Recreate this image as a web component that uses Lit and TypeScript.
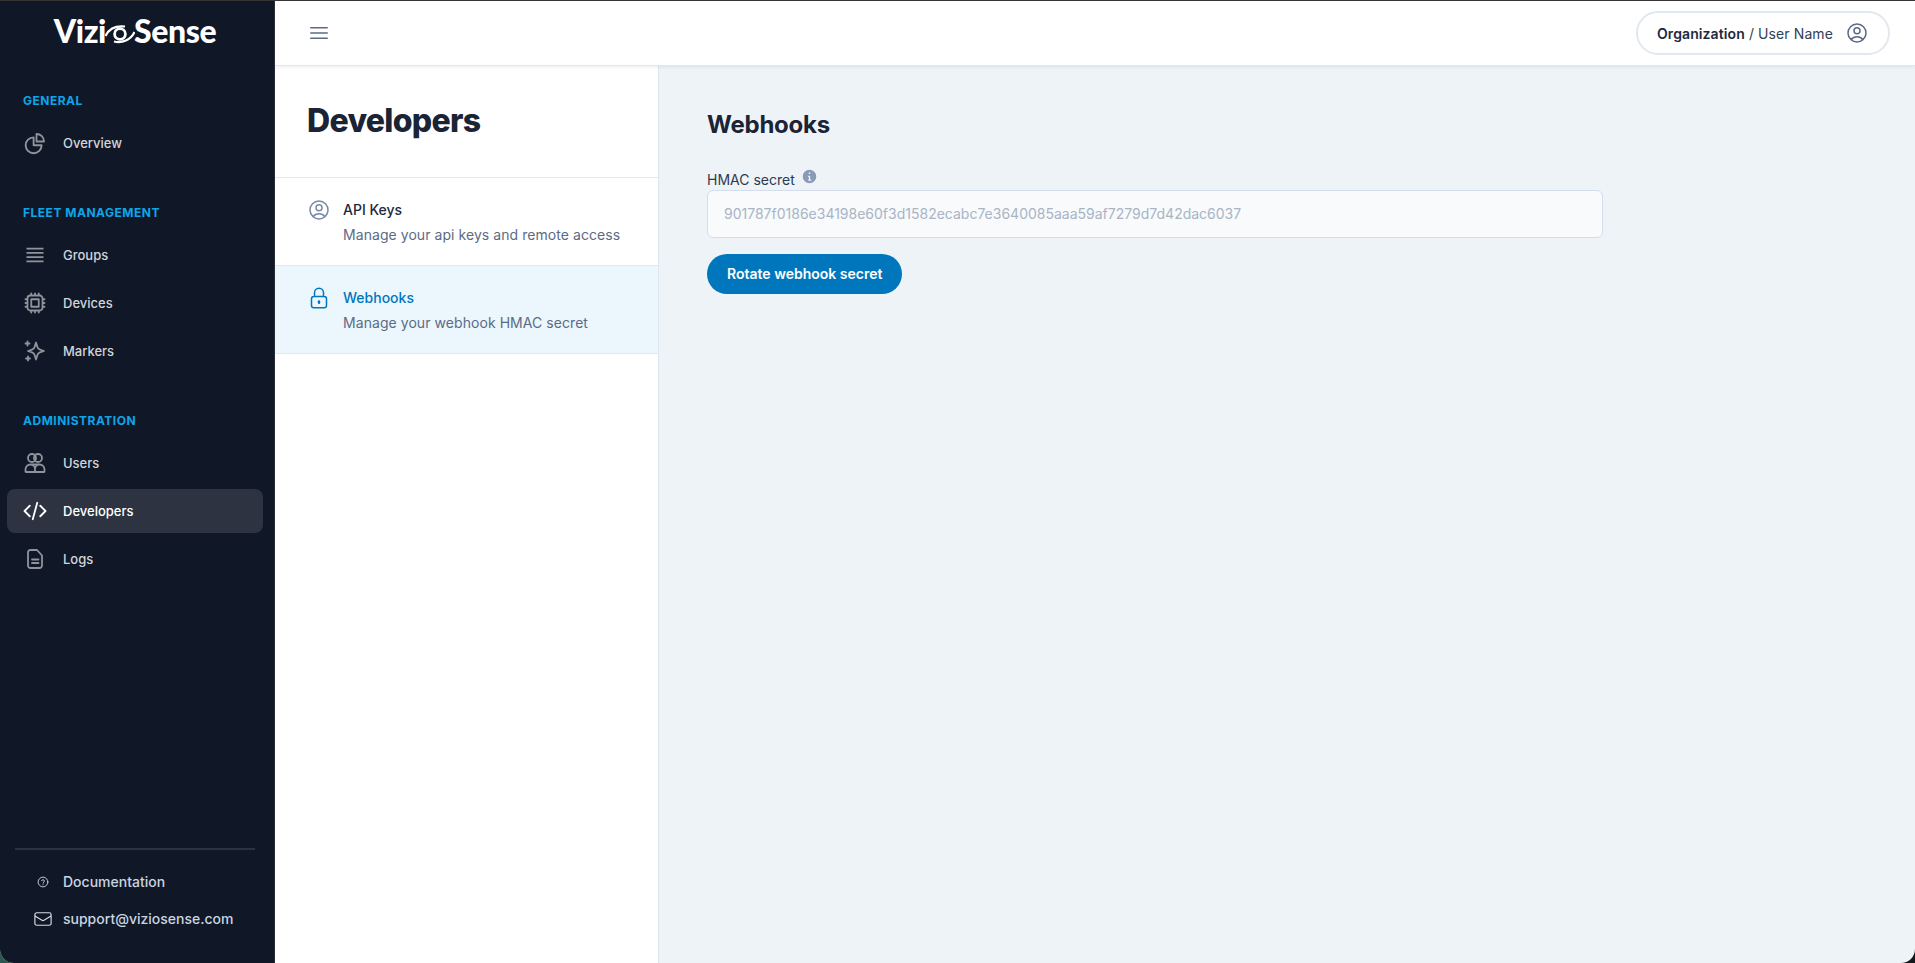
import { LitElement, html, css, svg } from "lit";
import { customElement } from "lit/decorators.js";

const ic = (body: unknown, size = 24, sw = 1.5, cls = "") => html`<svg class=${cls} width=${size} height=${size} viewBox="0 0 24 24" fill="none" stroke="currentColor" stroke-width=${sw} stroke-linecap="round" stroke-linejoin="round">${body}</svg>`;

const icons = {
  pie: svg`<path d="M10.5 6a7.5 7.5 0 1 0 7.5 7.5h-7.5V6Z" transform="translate(-0.5 0) scale(1.06)"/><path d="M13.5 10.5H21A7.5 7.5 0 0 0 13.5 3v7.5Z"/>`,
  groups: svg`<path d="M3.5 5.6h17M3.5 9.9h17M3.5 14.1h17M3.5 18.4h17" stroke-linecap="butt"/>`,
  chip: svg`<path d="M8.25 2.5v2M4.5 8.25h-2m19 0h-2M4.5 12h-2m19 0h-2m-15 3.75h-2m19 0h-2M8.25 19.5v2M12 2.5v2m0 15v2m3.75-19v2m0 15v2M7.25 19.5h9.5a2.75 2.75 0 0 0 2.75-2.75v-9.5a2.75 2.75 0 0 0-2.75-2.75h-9.5A2.75 2.75 0 0 0 4.5 7.25v9.5a2.75 2.75 0 0 0 2.75 2.75Zm1-11.25h7.5v7.5h-7.5v-7.5Z"/>`,
  spark: svg`<path d="M13.5 3.5l1.4 4.6a4 4 0 0 0 2.6 2.6l4 1.3-4 1.3a4 4 0 0 0-2.6 2.6l-1.4 4.6-1.4-4.6a4 4 0 0 0-2.6-2.6l-4-1.3 4-1.3a4 4 0 0 0 2.6-2.6l1.4-4.6Z" transform="translate(-0.5 0)"/><path d="M4.5 2.5v4M2.5 4.5h4M5 17.5v4M3 19.5h4"/>`,
  users: svg`<circle cx="9" cy="7" r="4"/><circle cx="15" cy="7" r="4"/><path d="M2.5 20.5v-2a5 5 0 0 1 5-5h9a5 5 0 0 1 5 5v2a.5.5 0 0 1-.5.5H3a.5.5 0 0 1-.5-.5Z"/><path d="M12 21v-3.5a4 4 0 0 0-2.5-3.5M12 17.5a4 4 0 0 1 2.5-3.5"/>`,
  code: svg`<path d="M17.25 6.75 22.5 12l-5.25 5.25m-10.5 0L1.5 12l5.25-5.25m7.5-3-4.5 16.5"/>`,
  doc: svg`<path d="M5 5.5A2.5 2.5 0 0 1 7.5 3H14l5 5.5v10a2.5 2.5 0 0 1-2.5 2.5h-9A2.5 2.5 0 0 1 5 18.5v-13Z"/><path d="M9 12.5h6.5M9 16h6.5"/>`,
  help: svg`<circle cx="12" cy="12" r="9.75"/><path d="M9.2 9.3a2.9 2.9 0 0 1 5.6.9c0 1.9-2.8 2.3-2.8 4"/><path d="M12 17.4v.1"/>`,
  mail: svg`<path d="M21.75 6.75v10.5a2.25 2.25 0 0 1-2.25 2.25h-15a2.25 2.25 0 0 1-2.25-2.25V6.75m19.5 0A2.25 2.25 0 0 0 19.5 4.5h-15a2.25 2.25 0 0 0-2.25 2.25m19.5 0v.243a2.25 2.25 0 0 1-1.07 1.916l-7.5 4.615a2.25 2.25 0 0 1-2.36 0L3.32 8.91a2.25 2.25 0 0 1-1.07-1.916V6.75"/>`,
  user: svg`<path d="M17.982 18.725A7.488 7.488 0 0 0 12 15.75a7.488 7.488 0 0 0-5.982 2.975m11.964 0a9 9 0 1 0-11.963 0m11.963 0A8.966 8.966 0 0 1 12 21a8.966 8.966 0 0 1-5.982-2.275M15 9.75a3 3 0 1 1-6 0 3 3 0 0 1 6 0Z"/>`,
  lock: svg`<path d="M16.5 10.5V6.75a4.5 4.5 0 1 0-9 0v3.75m-.75 11.25h10.5a2.25 2.25 0 0 0 2.25-2.25v-6.75a2.25 2.25 0 0 0-2.25-2.25H6.75a2.25 2.25 0 0 0-2.25 2.25v6.75a2.25 2.25 0 0 0 2.25 2.25Z"/><path d="M12 15.5v1.2" stroke-width="2.4"/>`,
  menu: svg`<path d="M3.75 6.75h16.5M3.75 12h16.5m-16.5 5.25h16.5"/>`,
};

const sections = [
  { title: "GENERAL", cls: "s1", items: [{ t: "Overview", i: icons.pie }] },
  { title: "FLEET MANAGEMENT", cls: "s2", items: [{ t: "Groups", i: icons.groups }, { t: "Devices", i: icons.chip }, { t: "Markers", i: icons.spark }] },
  { title: "ADMINISTRATION", cls: "s3", items: [{ t: "Users", i: icons.users }, { t: "Developers", i: icons.code, active: true }, { t: "Logs", i: icons.doc }] },
];

@customElement("app-root")
export class AppRoot extends LitElement {
  static styles = css`
    :host { display: block; width: 100%; height: 963px; overflow: hidden; background: linear-gradient(90deg, #2c5a50 0, #14181c 8%, #14181c 100%); font-family: Inter, "Liberation Sans", sans-serif; }
    * { box-sizing: border-box; }
    .shell { height: 963px; display: grid; grid-template-columns: 275px 1fr; border-top: 1px solid #343434; border-radius: 0 0 14px 14px; overflow: hidden; background: #eef3f8; }
    .side { background: #101827; display: flex; flex-direction: column; padding: 0 11px 0 7px; border-right: 1px solid #252b38; min-height: 0; }
    .logo { display: flex; align-items: center; justify-content: center; height: 60px; color: #fff; font-family: Lato, sans-serif; font-weight: 900; font-size: 32px; letter-spacing: -0.4px; line-height: 1; }
    .logo svg { margin: 5px -1px 0 -1px; flex: none; }
    .sec { display: flex; flex-direction: column; gap: 4px; }
    .s1 { margin-top: 32px; }
    .s2 { margin-top: 40px; }
    .s3 { margin-top: 40px; }
    .sec-t { margin: 0 0 8px 16px; height: 16px; line-height: 16px; font-size: 12px; font-weight: 700; letter-spacing: 0.5px; color: #0ea5e9; }
    .item { display: flex; align-items: center; height: 44px; padding-left: 16px; border-radius: 8px; color: #d1d5db; font-size: 13px; font-weight: 500; gap: 16px; }
    .item svg { color: #8f939b; flex: none; }
    .item.active { background: #2d3340; color: #fff; }
    .item.active svg { color: #fff; }
    .foot { margin-top: auto; padding: 0 8px 26px 8px; }
    .divider { height: 2px; background: #2b3240; margin-bottom: 13px; }
    .flink { display: flex; align-items: center; height: 37px; color: #cbd5e1; font-size: 14px; font-weight: 500; }
    .flink .ic { width: 36px; margin: 0 2px 0 10px; display: flex; justify-content: center; color: #d5dae2; }
    .main { display: flex; flex-direction: column; min-width: 0; min-height: 0; }
    .top { height: 65px; flex: none; background: #fff; border-bottom: 1px solid #e5e7eb; box-shadow: 0 1px 3px rgba(100,110,125,.14); display: flex; align-items: center; justify-content: space-between; padding: 0 25px 0 32px; position: relative; z-index: 1; }
    .burger { color: #5b6b85; display: flex; }
    .pill { height: 44px; width: 254px; border: 2px solid #e2e8f0; border-radius: 22px; display: flex; align-items: center; justify-content: flex-end; padding-right: 19px; gap: 12px; font-size: 14px; color: #334155; letter-spacing: 0.1px; }
    .pill b { font-weight: 600; color: #1e293b; }
    .pill svg { color: #5b6b85; }
    .body { flex: 1; display: flex; min-height: 0; }
    .panel { width: 384px; flex: none; background: #fff; border-right: 1px solid #dde4ee; }
    .panel h1 { margin: 0; height: 112px; padding: 0 0 2px 32px; display: flex; align-items: center; font-size: 32px; font-weight: 800; letter-spacing: -0.7px; color: #1a2435; border-bottom: 1px solid #e2e8f0; }
    .row { height: 88px; border-bottom: 1px solid #e2e8f0; display: flex; padding: 20px 0 0 32px; gap: 12px; }
    .row svg { color: #7a8ba6; flex: none; }
    .row .t { font-size: 14px; font-weight: 500; color: #1e293b; line-height: 24px; }
    .row .d { font-size: 14px; color: #5b6b85; line-height: 20px; margin-top: 3px; letter-spacing: 0.06px; }
    .row.on { background: #ebf6fd; }
    .row.on svg, .row.on .t { color: #0077bd; }
    .content { flex: 1; padding: 44px 48px 0 48px; min-width: 0; }
    .content h2 { margin: 0; font-size: 24px; line-height: 30px; font-weight: 700; letter-spacing: -0.25px; color: #1a2435; }
    .lab { display: flex; align-items: flex-start; gap: 6px; margin-top: 29px; height: 21px; font-size: 14px; line-height: 20px; color: #2c3a50; padding-top: 1px; }
    .lab svg { color: #8a9bb8; margin-top: -2px; }
    .inp { width: 896px; height: 48px; border: 1px solid #d3dded; border-radius: 6px; background: #f8fafc; display: flex; align-items: center; padding: 0 0 1px 16px; font-size: 14px; color: #a9b4c5; }
    .btn { margin-top: 16px; display: inline-flex; align-items: center; height: 40px; padding: 0 20px 1px; border: 0; border-radius: 20px; background: #0077bd; color: #fff; font: 600 14px Inter, sans-serif; }
  `;

  render() {
    return html`<div class="shell">
      <aside class="side">
        <div class="logo"><span>Vizi</span><svg width="30" height="24" viewBox="0 0 30 24" fill="none" stroke="#fff"><path d="M0.5 14C4 6.5 11 3.5 20 4.5M29.5 10C26 18 17 21.5 9 19.5" stroke-width="2.2"/><circle cx="15" cy="12" r="5.4" stroke-width="2.8"/></svg><span>Sense</span></div>
        ${sections.map(s => html`<section class="sec ${s.cls}">
          <div class="sec-t">${s.title}</div>
          ${s.items.map((it: any) => html`<div class="item ${it.active ? "active" : ""}">${ic(it.i, 24, 1.8)}<span>${it.t}</span></div>`)}
        </section>`)}
        <div class="foot">
          <div class="divider"></div>
          <div class="flink"><span class="ic">${ic(icons.help, 12, 1.8)}</span>Documentation</div>
          <div class="flink"><span class="ic">${ic(icons.mail, 20, 1.4)}</span>support@viziosense.com</div>
        </div>
      </aside>
      <div class="main">
        <header class="top">
          <span class="burger">${ic(icons.menu, 24, 1.5)}</span>
          <div class="pill"><span><b>Organization</b> / User Name</span>${ic(icons.user, 24, 1.5)}</div>
        </header>
        <div class="body">
          <nav class="panel">
            <h1>Developers</h1>
            <div class="row">${ic(icons.user)}<div><div class="t">API Keys</div><div class="d">Manage your api keys and remote access</div></div></div>
            <div class="row on">${ic(icons.lock)}<div><div class="t">Webhooks</div><div class="d">Manage your webhook HMAC secret</div></div></div>
          </nav>
          <main class="content">
            <h2>Webhooks</h2>
            <div class="lab"><span>HMAC secret</span><svg width="17" height="17" viewBox="0 0 20 20" fill="currentColor"><path fill-rule="evenodd" d="M18 10a8 8 0 1 1-16 0 8 8 0 0 1 16 0Zm-7-4a1 1 0 1 1-2 0 1 1 0 0 1 2 0ZM9 9a.75.75 0 0 0 0 1.5h.25v3H9A.75.75 0 0 0 9 15h2.5a.75.75 0 0 0 0-1.5h-.75V9.75A.75.75 0 0 0 10 9H9Z" clip-rule="evenodd"/></svg></div>
            <div class="inp">901787f0186e34198e60f3d1582ecabc7e3640085aaa59af7279d7d42dac6037</div>
            <button class="btn">Rotate webhook secret</button>
          </main>
        </div>
      </div>
    </div>`;
  }
}
